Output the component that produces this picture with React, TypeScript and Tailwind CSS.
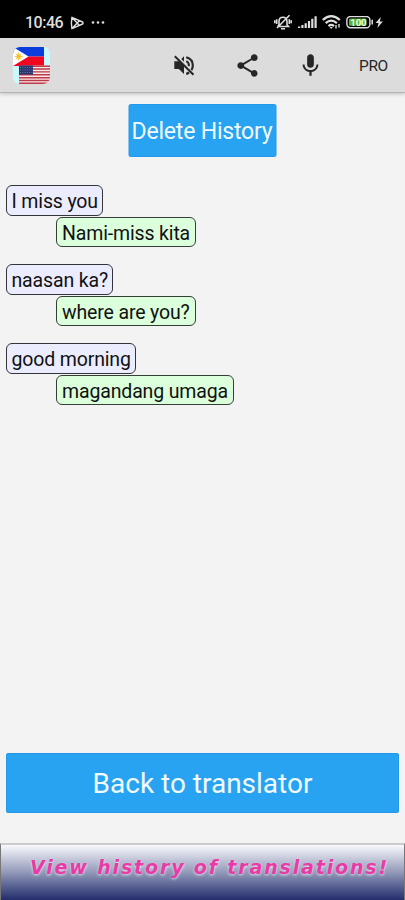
import { MdMic, MdShare } from 'react-icons/md';

interface Translation {
  source: string;
  target: string;
}

const history: Translation[] = [
  { source: 'I miss you', target: 'Nami-miss kita' },
  { source: 'naasan ka?', target: 'where are you?' },
  { source: 'good morning', target: 'magandang umaga' },
];

function StatusBar() {
  return (
    <div className="flex h-[38px] items-center bg-black pt-[7px] text-[#dedede]">
      <span className="ml-[25px] w-[38px] text-[16px] leading-none font-medium tracking-[-0.5px]">10:46</span>
      <svg className="ml-[7px]" width="14" height="14" viewBox="0 0 14 14" fill="none" stroke="currentColor" strokeWidth="1.4" strokeLinejoin="round">
        <path d="M1.9 1.3 12.6 6 Q13.6 7 12.6 8L1.9 12.7Q.9 7 1.9 1.3ZM2 1.5 9.3 9.3M2 12.5 9.3 4.7" />
      </svg>
      <svg className="ml-[7px]" width="14" height="4" viewBox="0 0 14 4" fill="currentColor">
        <circle cx="2" cy="1.5" r="1.3" />
        <circle cx="7" cy="1.5" r="1.3" />
        <circle cx="12" cy="1.5" r="1.3" />
      </svg>
      <svg className="ml-auto" width="18" height="16" viewBox="0 0 18 16" fill="none" stroke="currentColor" strokeWidth="1.6">
        <path d="M4 11.5h10.5L13 9.7V6.5C13 4 11.5 2.3 9 2.3S5 4 5 6.5v3.2L3.8 11.5M7 13.8h4M2.7 4.3v4.8M.8 5.2v3M15.3 4.3v4.8M17.2 5.2v3M15.5.3 3 13" />
      </svg>
      <svg className="ml-[6px]" width="19" height="13" viewBox="0 0 19 13" fill="currentColor">
        <path d="M0 10.4h2.2V12H0zM3.3 9h2.2v3H3.3zM6.6 7.2h2.2V12H6.6zM9.9 5h2.2v7H9.9zM13.2 2.8h2.2V12h-2.2zM16.5.3h2.2V12h-2.2z" />
      </svg>
      <svg className="ml-[5px]" width="19" height="15" viewBox="0 0 19 15" fill="none" stroke="currentColor" strokeWidth="2.2">
        <path d="M.8 5Q9.2-2.7 17.8 5M3.7 8.1q5.5-5 11.2 0M6.5 11.1q2.8-2.3 5.5 0" />
        <path d="m9.2 14-1.6-2h3.2z" fill="currentColor" stroke="none" />
        <path d="M14 10v3.5M17 9v3.5" strokeWidth="1.4" />
      </svg>
      <svg className="ml-[5px] mr-[21px]" width="38" height="13" viewBox="0 0 38 13" fill="none">
        <rect x=".9" y=".5" width="23" height="11.2" rx="3.5" stroke="#dedede" strokeWidth="1.4" />
        <rect x="3" y="2.5" width="17.5" height="7.2" rx="1.2" fill="#55b52c" />
        <path d="M26.2 3.8v4.6" stroke="#dedede" strokeWidth="1.5" />
        <text x="4.2" y="9.5" fill="#f0ffe8" fontSize="9.5" fontWeight="700" fontFamily="Roboto, sans-serif">100</text>
        <path d="m34.8 1-5.3 6h3l-1.2 5 5.6-6.4h-3z" fill="#dedede" />
      </svg>
    </div>
  );
}

function FlagLogo() {
  return (
    <svg className="ml-[13px]" width="37" height="37" viewBox="0 0 37 37">
      <clipPath id="logo">
        <rect width="37" height="37" rx="7" />
      </clipPath>
      <g clipPath="url(#logo)">
        <rect width="37" height="37" fill="#c9fafd" />
        <path d="M0 0h31v9.5H0z" fill="#0b3ddd" />
        <path d="M0 9.5h31V19H0z" fill="#f00720" />
        <path d="M0 0v19l15.5-9.5z" fill="#fff" />
        <circle cx="5.6" cy="9.4" r="2.2" fill="#f5bd28" />
        <path d="M5.6 5.5v8M1.7 9.5h8M2.8 6.7l5.6 5.6M8.4 6.7l-5.6 5.6" stroke="#f5bd28" strokeWidth=".9" />
        <path d="M6 18.5h31V37H6z" fill="#f8e9ea" />
        <path d="M6 19.2h31M6 22h31M6 24.9h31M6 27.8h31M6 30.7h31M6 33.5h31M6 36.3h31" stroke="#bd3946" strokeWidth="1.4" />
        <path d="M6 18.5h14v9H6z" fill="#29356e" />
        <path d="M7 20.5h13M7 23h13M7 25.5h13" stroke="#8691b5" strokeWidth=".7" strokeDasharray="1 1.3" />
      </g>
    </svg>
  );
}

function MutedIcon() {
  return (
    <svg className="ml-[124px]" width="21" height="21" viewBox="0 0 21 21" fill="none" stroke="currentColor">
      <path d="M.3 6.3H5.5L10 10.8V19L4.8 14H.3z" fill="currentColor" stroke="none" />
      <path d="M10 1.2v5.6L7.3 4z" fill="currentColor" stroke="none" />
      <path d="M.8 1.2 19.5 19.8" strokeWidth="2" />
      <path d="M12.2 2.2c3.8 1 6.6 4.2 6.6 8.3 0 1.8-.5 3.3-1.4 4.7M12.2 18.8c1-.2 2-.7 2.9-1.3" strokeWidth="2.2" />
      <path d="M12.3 6.2c1.8.8 2.8 2.5 2.6 5" strokeWidth="2" />
    </svg>
  );
}

function Toolbar() {
  return (
    <header className="relative flex h-[55px] shrink-0 items-center border-b border-[#b5b5b5] bg-[#dcdcdc] text-[#262626] shadow-[0_1px_4px_rgba(0,0,0,0.22)]">
      <FlagLogo />
      <MutedIcon />
      <MdShare className="ml-[39px]" size={27} />
      <MdMic className="ml-[36px]" size={27} />
      <span className="ml-[35px] pt-[3px] text-[15.5px] tracking-[-0.4px]">PRO</span>
    </header>
  );
}

function HistoryItem({ source, target }: Translation) {
  return (
    <div className="flex flex-col items-start gap-px text-[19.5px] leading-[31px] tracking-[-0.15px] text-[#111]">
      <span className="h-[30.5px] rounded-[6px] border border-[#34343c] bg-[#ececff] px-[4.5px] whitespace-nowrap">{source}</span>
      <span className="ml-[50px] h-[30.5px] rounded-[6px] border border-[#344034] bg-[#dcffdc] px-[5px] whitespace-nowrap">{target}</span>
    </div>
  );
}

export default function App() {
  return (
    <div className="flex h-[900px] w-[405px] flex-col overflow-hidden bg-[#f3f3f3] font-['Roboto',sans-serif]">
      <StatusBar />
      <Toolbar />
      <main className="flex flex-1 flex-col px-[6px] pt-[11px]">
        <button className="h-[53px] w-[148px] self-center rounded-[2px] border border-[#2498ea] bg-[#27a3f2] pt-[3px] text-[23px] tracking-[-0.2px] whitespace-nowrap text-[#f0faff] -translate-x-[0.5px]">
          Delete History
        </button>
        <div className="mt-[28.4px] flex flex-col gap-[17px]">
          {history.map((item) => (
            <HistoryItem key={item.source} {...item} />
          ))}
        </div>
        <button className="mt-auto mb-[30.5px] h-[60px] w-full rounded-[2px] border border-[#2498ea] bg-[#27a3f2] pt-[3px] text-[28px] text-[#f0faff]">
          Back to translator
        </button>
      </main>
      <footer className="h-[57px] shrink-0 border-x border-t-2 border-x-[#777] border-t-[#cbcbcb] bg-linear-to-b from-[#fafafc] via-[#9298b8] to-[#252d6b] pt-[8px] pl-[29px]">
        <p className="font-['DejaVu_Sans',sans-serif] text-[19px] leading-[28px] font-bold tracking-[1.85px] whitespace-nowrap text-[#e83ba7] italic [text-shadow:0_1px_3px_rgba(255,255,255,0.75)]">
          View history of translations!
        </p>
      </footer>
    </div>
  );
}
